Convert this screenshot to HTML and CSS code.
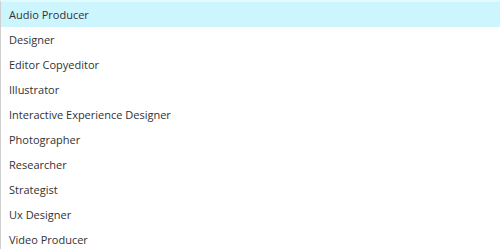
FILE: index.html
```html
<!DOCTYPE html>
<html>
<head>
<meta charset="utf-8">
<link rel="stylesheet" href="styles.css">
</head>
<body>
<ul class="options">
  <li class="option active">Audio Producer</li>
  <li class="option">Designer</li>
  <li class="option">Editor Copyeditor</li>
  <li class="option">Illustrator</li>
  <li class="option">Interactive Experience Designer</li>
  <li class="option">Photographer</li>
  <li class="option">Researcher</li>
  <li class="option">Strategist</li>
  <li class="option">Ux Designer</li>
  <li class="option">Video Producer</li>
</ul>
</body>
</html>
```
FILE: styles.css
```css
html, body {
  margin: 0;
  padding: 0;
  background: #ffffff;
}
.options {
  list-style: none;
  margin: 0;
  padding: 0;
  border-left: 1px solid #cfcfcf;
  border-top: 2px solid #e2f9fd;
  height: 247px;
  overflow: hidden;
  font-family: "Open Sans", sans-serif;
  font-size: 11px;
  color: #303236;
}
.option {
  height: 25px;
  line-height: 25px;
  padding-left: 8px;
  white-space: nowrap;
}
.option.active {
  background: #cdf5fd;
}
```
